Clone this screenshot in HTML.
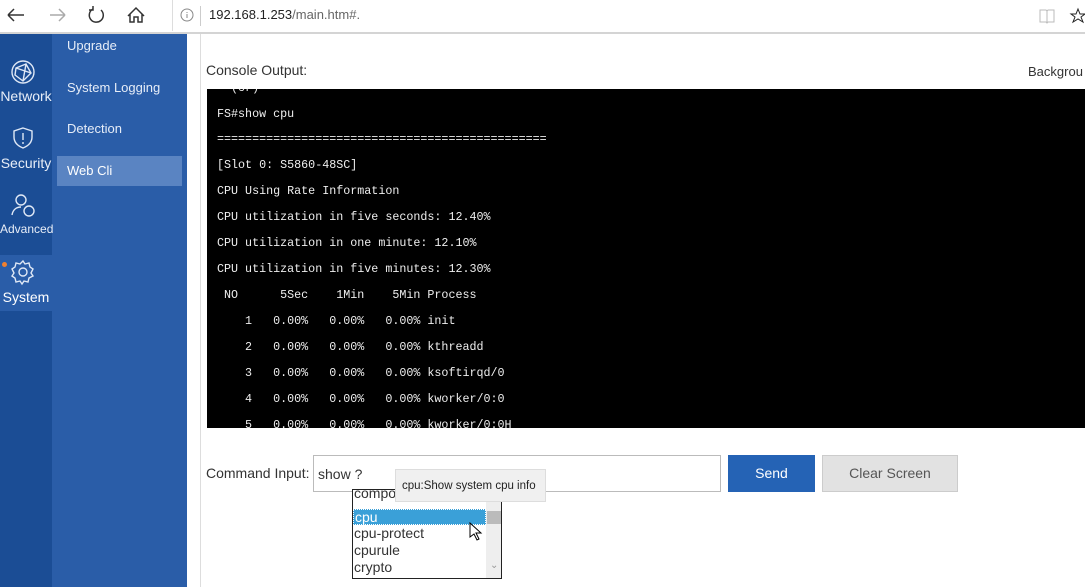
<!DOCTYPE html>
<html><head><meta charset="utf-8"><style>
*{margin:0;padding:0;box-sizing:border-box}
body{width:1085px;height:587px;overflow:hidden;background:#fff;font-family:"Liberation Sans",sans-serif;position:relative}
.abs{position:absolute}
.top{left:0;top:0;width:1085px;height:34px;background:#fff;border-bottom:2px solid #d4d4d4}
.addr{left:172px;top:0;width:913px;height:31px;border-left:1px solid #ddd;background:#fff}
.nav1{left:0;top:34px;width:52px;height:553px;background:#1b4d95}
.nav2{left:52px;top:34px;width:135px;height:553px;background:#2a5da8}
.ni{left:0;width:52px;text-align:center;color:#e8eef8;font-size:14px}
.sub{left:67px;color:#e6edf8;font-size:13px}
.con{left:207px;top:89px;width:878px;height:339px;background:#000;color:#eee;font-family:"Liberation Mono",monospace;font-size:11.7px;white-space:pre;overflow:hidden}
.con div{position:absolute;left:10px}
</style></head><body>
<div class="abs top"></div>
<svg class="abs" style="left:0;top:0" width="172" height="31">
<g fill="none" stroke="#333" stroke-width="1.5">
<path d="M8 15h16M8 15l6-6M8 15l6 6"/>
<path d="M50 15h15M65 15l-6-6M65 15l-6 6" stroke="#aaa"/>
<path d="M101 10a7 7 0 1 1-8-1M93 6v4h-4" />
<path d="M128 16l8-8 8 8M130 14v8h4v-5h4v5h4v-8"/>
</g></svg>
<div class="abs addr"></div>
<svg class="abs" style="left:180px;top:8px" width="14" height="14"><circle cx="7" cy="7" r="6" fill="none" stroke="#888"/><path d="M7 6v4M7 4v1" stroke="#888"/></svg>
<div class="abs" style="left:200px;top:6px;height:20px;border-left:1px solid #ccc"></div>
<div class="abs" style="left:209px;top:7px;font-size:13px;color:#222">192.168.1.253<span style="color:#666">/main.htm#.</span></div>
<svg class="abs" style="left:1038px;top:7px" width="47" height="18"><path d="M2 3h6l1 1 1-1h6v12h-6l-1 1-1-1H2zM9 4v11" fill="none" stroke="#bbb"/><path d="M40 2l2 5h5l-4 3 2 5-5-3-5 3 2-5-4-3h5z" fill="none" stroke="#222"/></svg>

<div class="abs nav1"></div>
<div class="abs nav2"></div>
<div class="abs" style="left:0;top:255px;width:52px;height:56px;background:#2a5da8"></div>
<div class="abs" style="left:2px;top:262px;width:5px;height:5px;border-radius:50%;background:#f08030"></div>
<svg class="abs" style="left:10px;top:58px" width="30" height="240" fill="none" stroke="#dfe8f6" stroke-width="1.4">
<circle cx="13" cy="14" r="11"/><path d="M6 10l10-4 5 9-8 8-8-6zM6 10l15 5M16 6l-3 17"/>
<path d="M13 70l9 3v6c0 6-4 9-9 11-5-2-9-5-9-11v-6z"/><path d="M13 75v7M13 84v2"/>
<circle cx="11" cy="142" r="5"/><path d="M2 157c1-6 5-8 9-8"/><circle cx="19" cy="153" r="5"/>
<circle cx="13" cy="214" r="4"/><path d="M13 203l2 3 4-1 1 4 3 2-2 4 2 3-4 2-1 4-4-1-2 3-2-3-4 1-1-4-3-2 2-3-2-4 3-2 1-4 4 1z"/>
</svg>
<div class="abs ni" style="top:88px">Network</div>
<div class="abs ni" style="top:155px">Security</div>
<div class="abs ni" style="top:222px;font-size:12px">Advanced</div>
<div class="abs ni" style="top:289px;color:#fff">System</div>
<div class="abs sub" style="top:38px">Upgrade</div>
<div class="abs sub" style="top:80px">System Logging</div>
<div class="abs sub" style="top:121px">Detection</div>
<div class="abs" style="left:57px;top:156px;width:125px;height:30px;background:#5a84c2"></div>
<div class="abs sub" style="top:163px;color:#fff">Web Cli</div>

<div class="abs" style="left:200px;top:34px;height:553px;border-left:1px solid #ddd"></div>
<div class="abs" style="left:206px;top:62px;font-size:14px;color:#333">Console Output:</div>
<div class="abs" style="left:1028px;top:64px;font-size:13px;color:#333">Backgrou</div>
<div class="abs con">
<div style="top:-8px">  (cr)</div>
<div style="top:18px">FS#show cpu</div>
<div style="top:43px">===============================================</div>
<div style="top:69px">[Slot 0: S5860-48SC]</div>
<div style="top:95px">CPU Using Rate Information</div>
<div style="top:121px">CPU utilization in five seconds: 12.40%</div>
<div style="top:147px">CPU utilization in one minute: 12.10%</div>
<div style="top:173px">CPU utilization in five minutes: 12.30%</div>
<div style="top:199px"> NO      5Sec    1Min    5Min Process</div>
<div style="top:225px">    1   0.00%   0.00%   0.00% init</div>
<div style="top:251px">    2   0.00%   0.00%   0.00% kthreadd</div>
<div style="top:277px">    3   0.00%   0.00%   0.00% ksoftirqd/0</div>
<div style="top:303px">    4   0.00%   0.00%   0.00% kworker/0:0</div>
<div style="top:329px">    5   0.00%   0.00%   0.00% kworker/0:0H</div>
</div>

<div class="abs" style="left:206px;top:465px;font-size:14px;color:#333">Command Input:</div>
<div class="abs" style="left:313px;top:455px;width:408px;height:37px;border:1px solid #bbb;background:#fff"></div>
<div class="abs" style="left:318px;top:466px;font-size:14px;color:#333">show ?</div>
<div class="abs" style="left:728px;top:455px;width:87px;height:37px;background:#2563b5;color:#fff;font-size:14px;text-align:center;line-height:37px">Send</div>
<div class="abs" style="left:822px;top:455px;width:136px;height:37px;background:#e2e2e2;border:1px solid #ccc;color:#555;font-size:14px;text-align:center;line-height:35px">Clear Screen</div>

<div class="abs" style="left:352px;top:489px;width:150px;height:90px;border:1px solid #222;background:#fff;overflow:hidden;font-size:14px;color:#333">
<div style="position:absolute;left:1px;top:-5px">component</div>
<div style="position:absolute;left:0;top:19px;width:133px;height:16px;background:#3aa0d8;border:1px dotted #fff;color:#fff;line-height:14px;padding-left:1px">cpu</div>
<div style="position:absolute;left:1px;top:35px">cpu-protect</div>
<div style="position:absolute;left:1px;top:52px">cpurule</div>
<div style="position:absolute;left:1px;top:69px">crypto</div>
<div style="position:absolute;left:133px;top:0;width:16px;height:90px;background:#eee"></div>
<div style="position:absolute;left:134px;top:21px;width:14px;height:13px;background:#bbb"></div>
<div style="position:absolute;left:137px;top:70px;font-size:10px;color:#999">&#8964;</div>
</div>
<div class="abs" style="left:395px;top:469px;width:151px;height:33px;background:#f0f0f0;border:1px solid #ddd;font-size:11.5px;color:#222;line-height:33px;padding-left:6px">cpu:Show system cpu info</div>
<svg class="abs" style="left:469px;top:522px" width="14" height="20"><path d="M1 1v14l4-3 3 6 2-1-3-6h5z" fill="#fff" stroke="#000"/></svg>
</body></html>
